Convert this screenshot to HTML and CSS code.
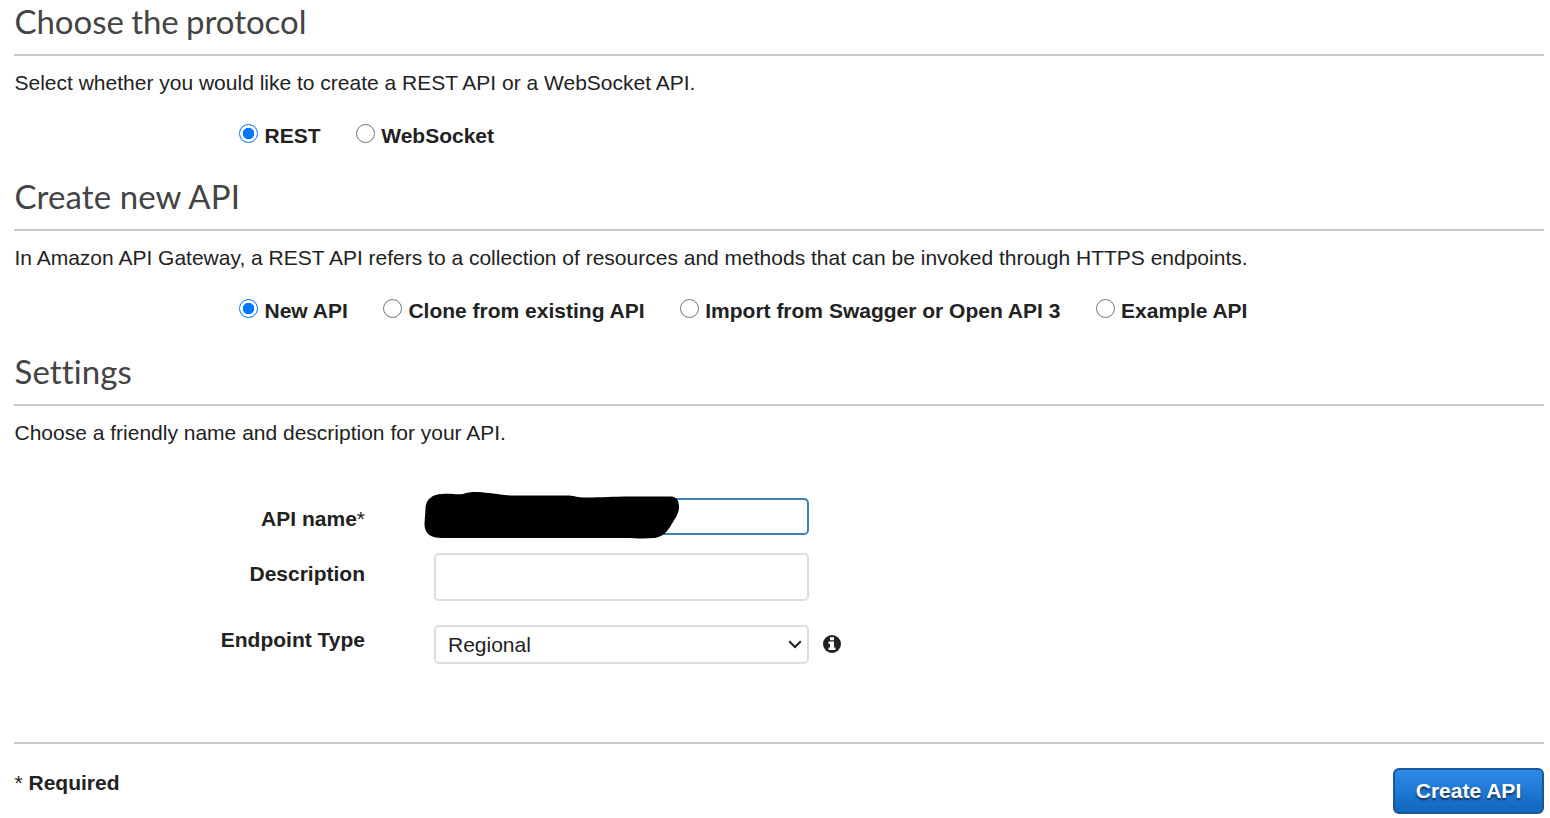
FILE: index.html
```html
<!DOCTYPE html>
<html lang="en">
<head>
<meta charset="utf-8">
<title>Create API</title>
<link rel="stylesheet" href="styles.css">
</head>
<body>
<main class="page">
  <section class="section protocol">
    <h2 class="heading">Choose the protocol</h2>
    <p class="intro">Select whether you would like to create a REST API or a WebSocket API.</p>
    <div class="options">
      <label class="option"><span class="radio checked"></span><span>REST</span></label>
      <label class="option"><span class="radio"></span><span>WebSocket</span></label>
    </div>
  </section>
  <section class="section">
    <h2 class="heading">Create new API</h2>
    <p class="intro">In Amazon API Gateway, a REST API refers to a collection of resources and methods that can be invoked through HTTPS endpoints.</p>
    <div class="options">
      <label class="option"><span class="radio checked"></span><span>New API</span></label>
      <label class="option"><span class="radio"></span><span>Clone from existing API</span></label>
      <label class="option"><span class="radio"></span><span>Import from Swagger or Open API 3</span></label>
      <label class="option"><span class="radio"></span><span>Example API</span></label>
    </div>
  </section>
  <section class="section settings">
    <h2 class="heading">Settings</h2>
    <p class="intro">Choose a friendly name and description for your API.</p>
    <div class="form">
      <div class="row name-row">
        <span class="label">API name<span class="star">*</span></span>
        <div class="field focused">
          <svg class="redaction" width="256" height="48" viewBox="0 0 256 48"><path d="M1.500 16C2 7 9 2 18 2C27 1 32 3 39 2C46 -.3 54 -.3 64 1C76 2 80 3.500 90 3.500H145C151 4 153 5.500 162 5.500C178 5.500 190 4.500 204 4.500H247C253 5 255 9 255 15C255 21 252 25 249 30C245 37 241 44 231 46C218 47 205 46 185 46H18C7 46 1 42 .5 33C.5 27 1.500 22 1.500 16Z"/></svg>
        </div>
      </div>
      <div class="row description-row">
        <span class="label">Description</span>
        <div class="field"></div>
      </div>
      <div class="row endpoint-row">
        <span class="label">Endpoint Type</span>
        <div class="field select"><span>Regional</span>
          <svg width="14" height="9" viewBox="0 0 14 9"><path d="M1.200 1.200L7 7L12.800 1.200" fill="none" stroke="#222" stroke-width="2"/></svg>
        </div>
        <svg class="info" width="18" height="18" viewBox="0 0 18 18"><circle cx="9" cy="9" r="9" fill="#1f2123"/><path d="M7 2.200H11V5.200H7ZM5.500 6.500H11V12.500H12.500V15H5.500V12.500H7V9H5.500Z" fill="#fff"/></svg>
      </div>
    </div>
  </section>
  <footer class="footer">
    <span class="required"><span class="star">*</span> Required</span>
    <button class="create" type="button">Create API</button>
  </footer>
</main>
</body>
</html>
```
FILE: styles.css
```css
* { box-sizing: border-box; }
body {
  margin: 0;
  background: #fff;
  color: #222;
  font: 21px/28px "Liberation Sans", Arial, sans-serif;
}
.page { height: 818px; padding: 0 6px 0 14px; overflow: hidden; }
.section { height: 175px; }
.settings { height: 392px; }
.heading {
  height: 56px;
  margin: 0;
  padding-left: 0.5px;
  border-bottom: 2px solid #c9c9c9;
  color: #444;
  font: 400 33px/43px Lato, sans-serif;
  font-variant-ligatures: none;
  letter-spacing: 0.1px;
}
.protocol .heading { letter-spacing: -0.05px; word-spacing: -1px; }
.intro { margin: 13px 0 0; padding-left: 0.5px; white-space: nowrap; }
.options { display: flex; gap: 35.2px; padding: 25px 0 0 225px; font-weight: 700; white-space: nowrap; }
.option { display: flex; gap: 6.5px; }
.radio {
  width: 19px;
  height: 19px;
  margin-top: 2px;
  border: 1px solid #767676;
  border-radius: 50%;
}
.radio.checked { border: 1.5px solid #0075ff; background: radial-gradient(circle, #0075ff 5.4px, transparent 6px); }
.form { padding-top: 51px; }
.row { display: flex; }
.label { width: 351px; margin-right: 69px; font-weight: 700; text-align: right; }
.star { font-weight: 400; }
.field { width: 375px; border: 2px solid #ddd; border-radius: 5px; }
.name-row { height: 55px; }
.name-row .label { padding-top: 7px; }
.focused { position: relative; height: 37px; border-color: #4080b5; }
.redaction { position: absolute; left: -12px; top: -8px; }
.description-row { height: 72px; }
.description-row .label { padding-top: 7px; }
.description-row .field { height: 48px; }
.endpoint-row .label { padding-top: 1px; }
.endpoint-row .select {
  display: flex;
  align-items: center;
  justify-content: space-between;
  height: 39px;
  padding: 0 5px 0 12px;
}
.info { margin: 10px 0 0 14px; }
.footer {
  display: flex;
  justify-content: space-between;
  border-top: 2px solid #c9c9c9;
}
.required { padding: 25px 0 0 0.5px; font-weight: 700; }
.create {
  width: 151px;
  height: 46px;
  margin-top: 24px;
  padding: 0;
  border: 2px solid #1a5796;
  border-radius: 6px;
  background: linear-gradient(#2d8be9, #1166bd);
  color: #fff;
  font: 700 21px/28px "Liberation Sans", Arial, sans-serif;
  text-shadow: 0 2px 2px #113355;
}
```
